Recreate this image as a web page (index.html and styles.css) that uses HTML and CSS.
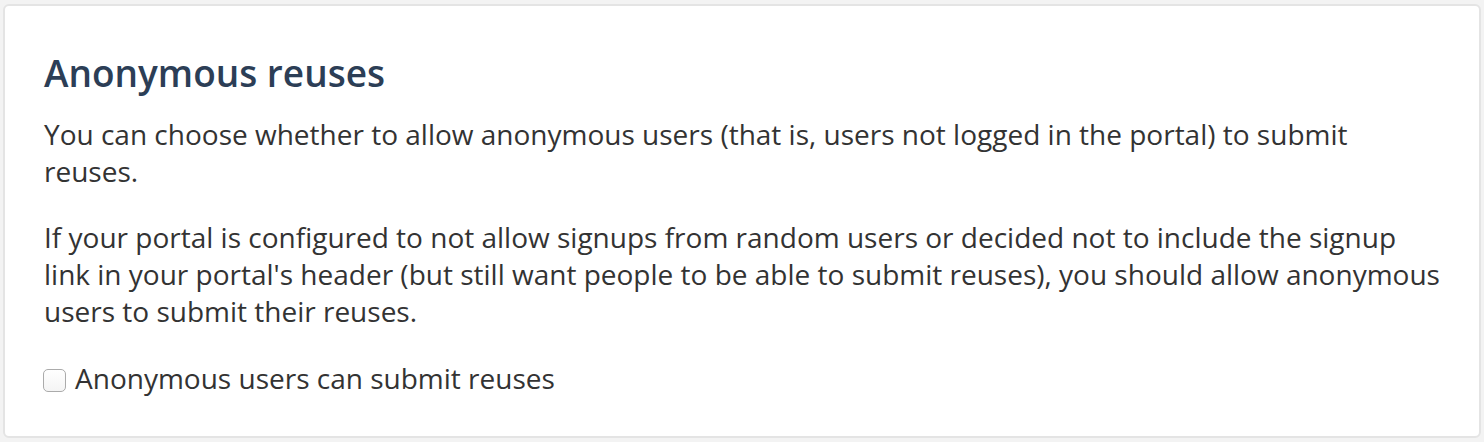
FILE: index.html
```html
<!DOCTYPE html>
<html lang="en">
<head>
<meta charset="utf-8">
<title>Anonymous reuses</title>
<link rel="stylesheet" href="styles.css">
</head>
<body>
<section class="card">
  <h2 class="card-title">Anonymous reuses</h2>
  <p class="para">You can choose whether to allow anonymous users (that is, users not logged in the portal) to submit reuses.</p>
  <p class="para">If your portal is configured to not allow signups from random users or decided not to include the signup link in your portal's header (but still want people to be able to submit reuses), you should allow anonymous users to submit their reuses.</p>
  <label class="option">
    <input type="checkbox" class="option-box">
    <span class="option-text">Anonymous users can submit reuses</span>
  </label>
</section>
</body>
</html>
```

FILE: styles.css
```css
html, body {
  margin: 0;
  padding: 0;
  background: #f3f3f3;
}

body {
  font-family: "Open Sans", "Noto Sans", sans-serif;
  color: #333333;
}

.card {
  margin: 4px 3px;
  background: #ffffff;
  border: 2px solid #e4e4e4;
  border-radius: 6px;
  padding: 46px 39px 39px;
}

.card-title {
  margin: 0 0 22px;
  font-size: 37px;
  font-weight: 600;
  line-height: 42px;
  color: #2c3e56;
}

.para {
  margin: 0;
  font-size: 28px;
  line-height: 37px;
}

.para + .para {
  margin-top: 29px;
}

.option {
  margin-top: 30px;
  display: flex;
  align-items: flex-start;
  gap: 9px;
  font-size: 28px;
  line-height: 37px;
  cursor: pointer;
}

.option-box {
  appearance: none;
  -webkit-appearance: none;
  margin: 9px 0 0 -1px;
  width: 23px;
  height: 23px;
  flex: none;
  border: 1px solid #ababab;
  border-radius: 5px;
  background: linear-gradient(#ffffff, #f4f4f4);
  box-sizing: border-box;
}
```
